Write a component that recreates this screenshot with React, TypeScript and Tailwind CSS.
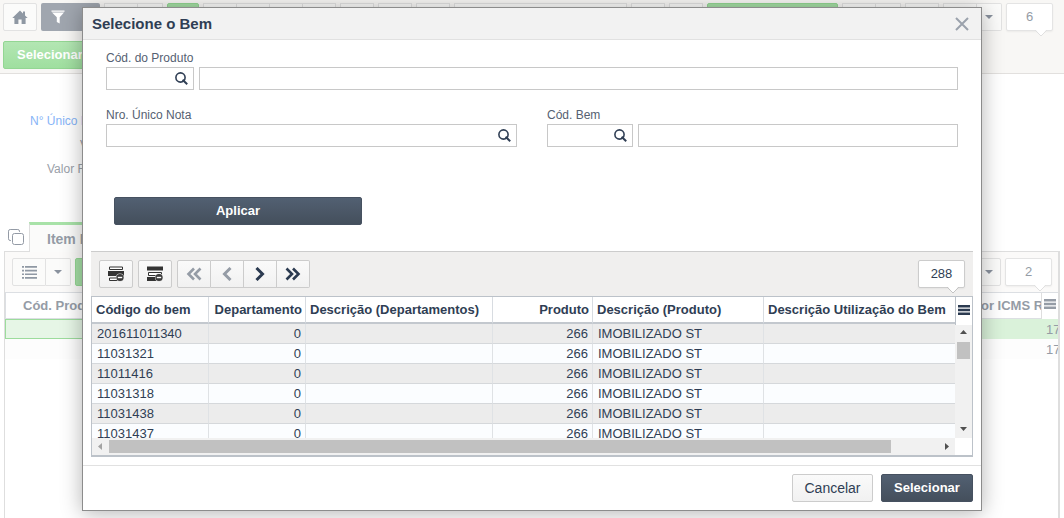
import type { ReactNode } from "react";

type Asset = {
  code: string;
  department: number;
  product: number;
  description: string;
};

const assets: Asset[] = [
  "201611011340",
  "11031321",
  "11011416",
  "11031318",
  "11031438",
  "11031437"
].map((code) => ({ code, department: 0, product: 266, description: "IMOBILIZADO ST" }));

const columns = [
  { label: "Código do bem", className: "w-[117px] text-left" },
  { label: "Departamento", className: "w-[97px] text-right" },
  { label: "Descrição (Departamentos)", className: "w-[187px] text-left" },
  { label: "Produto", className: "w-[100px] text-right" },
  { label: "Descrição (Produto)", className: "w-[171px] text-left" },
  { label: "Descrição Utilização do Bem", className: "text-left" }
];

const lightButton =
  "flex h-7 shrink-0 items-center justify-center border border-[#cccccc] bg-linear-to-b from-[#fafafa] to-[#f1f1f1]";
const darkButton =
  "h-7 rounded-xs border border-[#465160] bg-linear-to-b from-[#526072] to-[#444f5c] text-[13px] leading-4 font-bold text-white";
const fadedButton =
  "flex h-7 shrink-0 items-center justify-center border border-[#e2e2e2] bg-[#fbfbfa]";
const fieldBox = "h-[23px] border border-[#c8c8c8] bg-white";

function SearchIcon() {
  return (
    <svg width="13" height="13" viewBox="0 0 13 13" fill="none" stroke="#2f3e54" aria-hidden="true">
      <circle cx="5.5" cy="5.5" r="4.6" strokeWidth="1.6" />
      <path d="M7.6 7.8 12.2 12.2" strokeWidth="2" />
    </svg>
  );
}

function HomeIcon() {
  return (
    <svg width="16" height="15" viewBox="0 0 16 15" fill="#8f98a3" aria-hidden="true">
      <path d="M8 .5 11 3.4V1.5h2v3.9l2.7 2.6H13.6V14H9.6V9.5H6.4V14H2.4V8H.3Z" />
    </svg>
  );
}

function FilterIcon() {
  return (
    <svg width="14" height="15" viewBox="0 0 14 15" fill="#ffffff" aria-hidden="true">
      <path d="M.5.5h13v1.2H.5ZM1 2.5h12L8.7 7.3v6.2L5.8 12V7.3Z" />
    </svg>
  );
}

function CopyIcon() {
  return (
    <svg width="16" height="16" viewBox="0 0 16 16" fill="none" stroke="#939aa5" aria-hidden="true">
      <path d="M3 11.5H2.2A1.7 1.7 0 0 1 .5 9.8V2.2A1.7 1.7 0 0 1 2.2.5h7.6a1.7 1.7 0 0 1 1.7 1.7V3" />
      <rect x="4.5" y="4.5" width="11" height="11" rx="2" />
    </svg>
  );
}

function ListIcon() {
  return (
    <svg width="15" height="13" viewBox="0 0 15 13" fill="#8f98a3" aria-hidden="true">
      <path d="M0 0h2v1.7H0ZM0 3.700h2v1.7H0ZM0 7.400h2v1.7H0ZM0 11.1h2v1.7H0ZM3 0H15v1.7H3ZM3 3.700H15v1.7H3ZM3 7.400H15v1.7H3ZM3 11.1H15v1.7H3Z" />
    </svg>
  );
}

function Caret() {
  return (
    <svg width="8" height="4" viewBox="0 0 8 4" fill="#8a929e" aria-hidden="true">
      <path d="M0 0h8L4 4Z" />
    </svg>
  );
}

function MenuIcon({ color }: { color: string }) {
  return (
    <svg width="12" height="10" viewBox="0 0 12 10" fill={color} aria-hidden="true">
      <path d="M0 0h12v2.500H0ZM0 3.700h12v2.500H0ZM0 7.400h12v2.500H0Z" />
    </svg>
  );
}

function RowsIcon({ variant }: { variant: "middle" | "edges" }) {
  return (
    <svg width="16" height="16" viewBox="0 0 16 16" aria-hidden="true">
      {variant === "middle" ? (
        <>
          <path d="M1.500 1h13v2.500h-13Z" fill="#ffffff" stroke="#333333" />
          <path d="M0 5h16v5H0Z" fill="#333333" />
          <path d="M1.500 12h8v2.500h-8Z" fill="#ffffff" stroke="#333333" />
        </>
      ) : (
        <>
          <path d="M0 .5h16v4H0Z" fill="#333333" />
          <path d="M1.500 6.500h13v3h-13Z" fill="#ffffff" stroke="#333333" />
          <path d="M0 11h9v4H0Z" fill="#333333" />
        </>
      )}
      <circle cx="12" cy="11.500" r="4" fill="#d8d8d8" />
      <circle cx="12" cy="11.500" r="3.600" fill="#3a3a3a" />
      <path d="M9.800 10.800h4.400v1.400H9.800Z" fill="#ffffff" />
    </svg>
  );
}

function Chevron({ double, flip, color }: { double?: boolean; flip?: boolean; color: string }) {
  return (
    <svg
      width={double ? 16 : 10}
      height="14"
      viewBox={double ? "0 0 16 14" : "0 0 10 14"}
      className={flip ? "-scale-x-100" : ""}
      fill="none"
      stroke={color}
      aria-hidden="true"
    >
      {double ? (
        <path d="M1.500 1.500 7 7l-5.500 5.500M8 1.500 13.500 7 8 12.500" strokeWidth="2.600" />
      ) : (
        <path d="M1.500 1 7.500 7l-6 6" strokeWidth="3" />
      )}
    </svg>
  );
}

function CountBadge({ value, faded }: { value: number; faded?: boolean }) {
  return (
    <div
      className={[
        "relative flex h-7 w-[47px] shrink-0 items-center justify-center rounded-xs border bg-white text-[13px] shadow-xs",
        faded ? "border-[#e4e4e4] text-[#959ca6]" : "border-[#cccccc] text-[#2f3e54]"
      ].join(" ")}
    >
      {value}
      <svg width="14" height="8" viewBox="0 0 14 8" className="absolute top-[25px] right-1" aria-hidden="true">
        <path d="M1 0 7 7l6-7Z" fill="#ffffff" />
        <path d="M1 1l6 6 6-6" fill="none" stroke={faded ? "#e0e0e0" : "#c4c4c4"} />
      </svg>
    </div>
  );
}

function Field({ id, label, className, children }: { id: string; label: string; className?: string; children: ReactNode }) {
  return (
    <div className={className}>
      <label htmlFor={id} className="block text-xs leading-[18px] text-[#556172]">
        {label}
      </label>
      <div className="flex gap-[5px]">{children}</div>
    </div>
  );
}

function LookupInput({ id, className }: { id: string; className: string }) {
  return (
    <div className={["flex items-center", fieldBox, className].join(" ")}>
      <input id={id} type="text" className="h-full min-w-0 flex-1 px-1 text-xs outline-none" />
      <button type="button" aria-label="Pesquisar" className="flex w-6 shrink-0 justify-center">
        <SearchIcon />
      </button>
    </div>
  );
}

function TopToolbar() {
  return (
    <header className="h-[74px] border-b border-[#e2e0de] bg-[#f8f7f5] px-[3px] pt-[3px]">
      <div className="flex gap-1">
        <button type="button" aria-label="Início" className={`${fadedButton} w-[34px] rounded-xs`}>
          <HomeIcon />
        </button>
        <button type="button" aria-label="Filtro" className="flex h-7 w-[59px] shrink-0 items-center rounded-xs bg-[#a0a6af] pl-[10px]">
          <FilterIcon />
        </button>
        <div className="flex">
          <span className={`${fadedButton} w-[34px]`} />
          <span className={`${fadedButton} w-[25px] border-l-0`} />
        </div>
        <span className="h-7 w-8 shrink-0 rounded-xs border border-[#93d693] bg-[#a5dfa5]" />
        <div className="flex">
          <span className={`${fadedButton} w-[34px]`} />
          <span className={`${fadedButton} w-[33px] border-l-0`} />
          <span className={`${fadedButton} w-[33px] border-l-0`} />
          <span className={`${fadedButton} w-[33px] border-l-0`} />
        </div>
        <span className={`${fadedButton} w-[34px]`} />
        <span className={`${fadedButton} w-[34px]`} />
        <span className={`${fadedButton} w-[34px]`} />
        <span className={`${fadedButton} min-w-0 flex-1 shrink`} />
        <span className={`${fadedButton} w-[34px]`} />
        <span className={`${fadedButton} w-[34px]`} />
        <span className="h-7 w-[131px] shrink-0 rounded-xs border border-[#93d693] bg-[#a5dfa5]" />
        <div className="flex">
          <span className={`${fadedButton} w-[34px]`} />
          <span className={`${fadedButton} w-[25px] border-l-0`} />
        </div>
        <span className={`${fadedButton} w-[34px]`} />
        <div className="flex">
          <span className={`${fadedButton} w-[34px]`} />
          <button type="button" aria-label="Mais opções" className={`${fadedButton} w-[25px] rounded-r-xs border-l-0`}>
            <Caret />
          </button>
        </div>
        <div className="mr-2">
          <CountBadge value={6} faded />
        </div>
      </div>
      <button
        type="button"
        className="mt-[10px] h-7 rounded-xs border border-[#93d693] bg-linear-to-b from-[#b3e6b3] to-[#9fdf9f] px-[13px] text-[13px] leading-4 font-bold text-white"
      >
        Selecionar
      </button>
    </header>
  );
}

function ItemsPanel() {
  return (
    <section className="flex flex-1 flex-col pr-1 pl-1">
      <div className="flex h-[30px]">
        <span className="w-[25px] shrink-0 border-b border-[#dedede] pt-[7px] pl-1">
          <CopyIcon />
        </span>
        <div className="w-32 border-t-3 border-l border-t-[#a8e2a8] border-l-[#dedede] bg-[#fbfbfa] pt-1 pl-[17px] text-sm leading-5 font-bold text-[#959ca6]">
          Item D
        </div>
        <span className="flex-1 border-b border-[#dedede]" />
      </div>
      <div className="flex flex-1 flex-col border-r-2 border-l border-[#dedede]">
        <div className="flex h-10 items-center bg-[#fbfaf9] pr-[6px] pl-[7px]">
          <div className="flex">
            <button type="button" aria-label="Modo lista" className={`${fadedButton} w-[34px] rounded-l-xs`}>
              <ListIcon />
            </button>
            <button type="button" aria-label="Opções da lista" className={`${fadedButton} w-[25px] rounded-r-xs border-l-0`}>
              <Caret />
            </button>
          </div>
          <span className="ml-1 h-7 w-9 rounded-xs border border-[#93d693] bg-[#a5dfa5]" />
          <button type="button" aria-label="Mais opções" className={`${fadedButton} mr-1 ml-auto w-[25px] rounded-r-xs`}>
            <Caret />
          </button>
          <CountBadge value={2} faded />
        </div>
        <div className="flex h-[27px] border-t border-b border-l border-[#dcdfe3] text-[13px] leading-[25px] font-bold text-[#959ca6]">
          <span className="pl-[17px]">Cód. Prod</span>
          <span className="ml-auto w-[60px] overflow-hidden whitespace-nowrap">or ICMS R</span>
          <span className="flex h-7 w-[17px] items-start justify-center border-l border-[#dedede] bg-white pt-[6px]">
            <MenuIcon color="#959ca6" />
          </span>
        </div>
        <div className="flex h-5 bg-[#daf2da] text-[13px] leading-[21px] text-[#959ca6]">
          <span className="w-32 border border-[#9cdc9c] bg-[#e6f6e6]" />
          <span className="ml-auto w-3 overflow-hidden">17</span>
        </div>
        <div className="flex h-5 bg-[#fdfdfd] text-[13px] leading-[21px] text-[#959ca6]">
          <span className="ml-auto w-3 overflow-hidden">17</span>
        </div>
      </div>
    </section>
  );
}

function AssetTable() {
  return (
    <div className="flex h-[161px] flex-col border border-b-2 border-[#bcc2c9] bg-white">
      <div className="flex min-h-0 flex-1">
        <div className="h-full min-w-0 flex-1 overflow-hidden">
          <table className="w-full table-fixed border-separate border-spacing-0 text-[13px] leading-[18px] text-[#2f3e54]">
            <thead>
              <tr className="h-[27px]">
                {columns.map((column) => (
                  <th
                    key={column.label}
                    scope="col"
                    className={[
                      "border-r border-b-2 border-r-[#d8dce1] border-b-[#c3c8ce] py-0 pr-[3px] pl-1 font-bold whitespace-nowrap last:border-r-0",
                      column.className
                    ].join(" ")}
                  >
                    {column.label}
                  </th>
                ))}
              </tr>
            </thead>
            <tbody>
              {assets.map((asset) => (
                <tr
                  key={asset.code}
                  className="h-5 odd:bg-[#ececec] even:bg-[#fbfdff] *:border-r *:border-b *:border-r-[#dfe2e5] *:border-b-[#d5d8db] *:pt-px *:pr-1 *:pb-0 *:pl-[5px] *:last:border-r-0"
                >
                  <td>{asset.code}</td>
                  <td className="text-right">{asset.department}</td>
                  <td />
                  <td className="text-right">{asset.product}</td>
                  <td>{asset.description}</td>
                  <td />
                </tr>
              ))}
            </tbody>
          </table>
        </div>
        <div className="flex w-[17px] shrink-0 flex-col">
          <button type="button" aria-label="Configurar colunas" className="flex h-7 items-center justify-center border-l border-[#bcc2c9] bg-white pb-[3px]">
            <MenuIcon color="#2b3a50" />
          </button>
          <div className="flex flex-1 flex-col items-center justify-between bg-[#f1f1f1] pt-[5px] pb-[7px]">
            <svg width="7" height="4" viewBox="0 0 7 4" fill="#505050" aria-hidden="true">
              <path d="M0 4h7L3.500 0Z" />
            </svg>
            <span className="mt-2 mb-auto h-[17px] w-[13px] bg-[#c1c1c1]" />
            <svg width="7" height="4" viewBox="0 0 7 4" fill="#505050" aria-hidden="true">
              <path d="M0 0h7L3.500 4Z" />
            </svg>
          </div>
        </div>
      </div>
      <div className="mr-[17px] flex h-[17px] shrink-0 items-center bg-[#f1f1f1] px-[6px]">
        <svg width="4" height="7" viewBox="0 0 4 7" fill="#a3a3a3" aria-hidden="true">
          <path d="M4 0v7L0 3.500Z" />
        </svg>
        <span className="mr-[54px] ml-[7px] h-[13px] flex-1 bg-[#c1c1c1]" />
        <svg width="4" height="7" viewBox="0 0 4 7" fill="#505050" aria-hidden="true">
          <path d="M0 0v7l4-3.500Z" />
        </svg>
      </div>
    </div>
  );
}

function SelectAssetDialog() {
  return (
    <div
      role="dialog"
      aria-labelledby="dialog-title"
      className="w-[900px] max-w-full border border-[#8c8c8c] bg-white shadow-[0_2px_20px_rgba(0,0,0,0.3)]"
    >
      <div className="flex h-8 items-center justify-between border-b border-[#e1e1e1] bg-[#f2f2f2] pr-3 pl-[9px]">
        <h1 id="dialog-title" className="text-[15px] leading-5 font-bold text-[#2f3e54]">
          Selecione o Bem
        </h1>
        <button type="button" aria-label="Fechar">
          <svg width="14" height="14" viewBox="0 0 14 14" fill="none" stroke="#9ba2ac" strokeWidth="2" aria-hidden="true">
            <path d="M1 1l12 12M13 1 1 13" />
          </svg>
        </button>
      </div>

      <form className="px-[23px] pt-[9px]">
        <Field id="product-code" label="Cód. do Produto">
          <LookupInput id="product-code" className="w-[88px]" />
          <input aria-label="Descrição do produto" type="text" className={`${fieldBox} min-w-0 flex-1 px-1 text-xs`} />
        </Field>
        <div className="mt-4 flex gap-[30px]">
          <Field id="note-number" label="Nro. Único Nota" className="flex-1">
            <LookupInput id="note-number" className="flex-1" />
          </Field>
          <Field id="asset-code" label="Cód. Bem" className="flex-1">
            <LookupInput id="asset-code" className="w-[86px]" />
            <input aria-label="Descrição do bem" type="text" className={`${fieldBox} min-w-0 flex-1 px-1 text-xs`} />
          </Field>
        </div>
        <button type="button" className={`${darkButton} mt-[50px] ml-2 block w-[248px]`}>
          Aplicar
        </button>
      </form>

      <div className="mx-2 mt-[26px]">
        <div className="flex h-[45px] items-center gap-[5px] border-t border-[#cccccc] bg-[#f0efee] px-2">
          <button type="button" aria-label="Ocultar linhas do meio" className={`${lightButton} w-[34px] rounded-xs`}>
            <RowsIcon variant="middle" />
          </button>
          <button type="button" aria-label="Ocultar cabeçalho" className={`${lightButton} w-[34px] rounded-xs`}>
            <RowsIcon variant="edges" />
          </button>
          <div className="flex">
            <button type="button" aria-label="Primeira página" className={`${lightButton} w-[34px] rounded-l-xs`}>
              <Chevron double flip color="#959ca6" />
            </button>
            <button type="button" aria-label="Página anterior" className={`${lightButton} w-[33px] border-l-0`}>
              <Chevron flip color="#959ca6" />
            </button>
            <button type="button" aria-label="Próxima página" className={`${lightButton} w-[33px] border-l-0`}>
              <Chevron color="#2b3a50" />
            </button>
            <button type="button" aria-label="Última página" className={`${lightButton} w-[33px] rounded-r-xs border-l-0`}>
              <Chevron double color="#2b3a50" />
            </button>
          </div>
          <div className="ml-auto">
            <CountBadge value={288} />
          </div>
        </div>
        <AssetTable />
      </div>

      <div className="mt-2 flex justify-end gap-2 border-t border-[#e1e1e1] px-2 py-2">
        <button type="button" className={`${lightButton} w-[81px] rounded-xs text-sm text-[#2f3e54]`}>
          Cancelar
        </button>
        <button type="button" className={`${darkButton} w-[92px]`}>
          Selecionar
        </button>
      </div>
    </div>
  );
}

export default function App() {
  return (
    <div className="relative flex min-h-screen flex-col overflow-hidden bg-white font-['Liberation_Sans',Arial,sans-serif]">
      <TopToolbar />
      <div className="flex h-[148px] flex-col gap-[6px] pt-[38px] text-xs leading-[18px] text-[#9aa0a9]">
        <span className="pl-[30px] text-[#86b4f7]">N° Único N</span>
        <span className="pl-20">V</span>
        <span className="pl-[47px]">Valor F</span>
      </div>
      <ItemsPanel />
      <div className="absolute inset-0 flex items-center justify-center">
        <SelectAssetDialog />
      </div>
    </div>
  );
}
